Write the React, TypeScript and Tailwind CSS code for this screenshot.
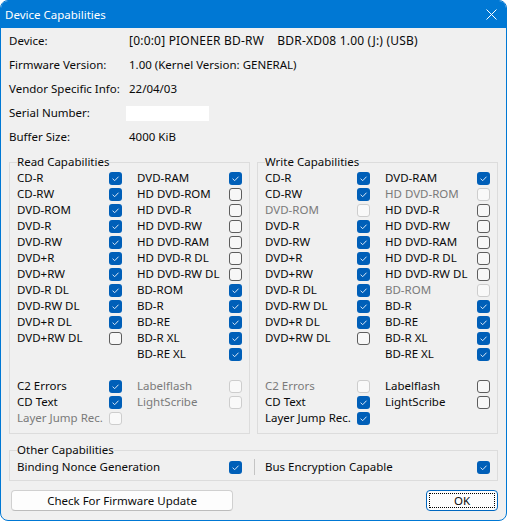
import type { ReactNode } from "react";

type Cap = { label: string; on?: boolean; off?: boolean };

// off = greyed out (not applicable), on = checked
const readCol1: Cap[] = [
  { label: "CD-R", on: true },
  { label: "CD-RW", on: true },
  { label: "DVD-ROM", on: true },
  { label: "DVD-R", on: true },
  { label: "DVD-RW", on: true },
  { label: "DVD+R", on: true },
  { label: "DVD+RW", on: true },
  { label: "DVD-R DL", on: true },
  { label: "DVD-RW DL", on: true },
  { label: "DVD+R DL", on: true },
  { label: "DVD+RW DL" },
];

const readCol2: Cap[] = [
  { label: "DVD-RAM", on: true },
  { label: "HD DVD-ROM" },
  { label: "HD DVD-R" },
  { label: "HD DVD-RW" },
  { label: "HD DVD-RAM" },
  { label: "HD DVD-R DL" },
  { label: "HD DVD-RW DL" },
  { label: "BD-ROM", on: true },
  { label: "BD-R", on: true },
  { label: "BD-RE", on: true },
  { label: "BD-R XL", on: true },
  { label: "BD-RE XL", on: true },
];

const readExtra: (Cap | null)[] = [
  { label: "C2 Errors", on: true },
  { label: "Labelflash", off: true },
  { label: "CD Text", on: true },
  { label: "LightScribe", off: true },
  { label: "Layer Jump Rec.", off: true },
  null,
];

const writeCol1: Cap[] = [
  { label: "CD-R", on: true },
  { label: "CD-RW", on: true },
  { label: "DVD-ROM", off: true },
  { label: "DVD-R", on: true },
  { label: "DVD-RW", on: true },
  { label: "DVD+R", on: true },
  { label: "DVD+RW", on: true },
  { label: "DVD-R DL", on: true },
  { label: "DVD-RW DL", on: true },
  { label: "DVD+R DL", on: true },
  { label: "DVD+RW DL" },
];

const writeCol2: Cap[] = [
  { label: "DVD-RAM", on: true },
  { label: "HD DVD-ROM", off: true },
  { label: "HD DVD-R" },
  { label: "HD DVD-RW" },
  { label: "HD DVD-RAM" },
  { label: "HD DVD-R DL" },
  { label: "HD DVD-RW DL" },
  { label: "BD-ROM", off: true },
  { label: "BD-R", on: true },
  { label: "BD-RE", on: true },
  { label: "BD-R XL", on: true },
  { label: "BD-RE XL", on: true },
];

const writeExtra: (Cap | null)[] = [
  { label: "C2 Errors", off: true },
  { label: "Labelflash" },
  { label: "CD Text", on: true },
  { label: "LightScribe" },
  { label: "Layer Jump Rec.", on: true },
  null,
];

const info: [string, ReactNode][] = [
  [
    "Device:",
    <span className="text-[12px] tracking-[0.2px]">
      [0:0:0] PIONEER BD-RW{"\u00a0\u00a0\u00a0\u00a0"}BDR-XD08 1.00 (J:) (USB)
    </span>,
  ],
  ["Firmware Version:", "1.00 (Kernel Version: GENERAL)"],
  ["Vendor Specific Info:", "22/04/03"],
  ["Serial Number:", <div className="ml-[-3px] h-[15px] w-[83px] bg-white" />],
  ["Buffer Size:", "4000 KiB"],
];

function Box({ on, off }: { on?: boolean; off?: boolean }) {
  if (on) {
    return (
      <span className="flex h-[13px] w-[13px] shrink-0 items-center justify-center rounded-[3px] bg-[#005fb8]">
        <svg width="13" height="13" viewBox="0 0 13 13" fill="none">
          <path d="M3.6 6.7l2.1 2 3.8-4" stroke="#dbe8f6" strokeWidth="1" />
        </svg>
      </span>
    );
  }
  return (
    <span
      className={
        off
          ? "h-[13px] w-[13px] shrink-0 rounded-[3px] border border-[#cdcdcd] bg-[#f9f9f9]"
          : "h-[13px] w-[13px] shrink-0 rounded-[3px] border border-[#5d5d5d] bg-[#f7f7f7]"
      }
    />
  );
}

function Row({ cap }: { cap: Cap }) {
  return (
    <div className="flex h-[16px] w-[105px] items-center">
      <span className={cap.off ? "flex-1 text-[#7a7a7a]" : "flex-1"}>{cap.label}</span>
      <Box on={cap.on} off={cap.off} />
    </div>
  );
}

function Group({
  title,
  col1,
  col2,
  extra,
}: {
  title: string;
  col1: Cap[];
  col2: Cap[];
  extra: (Cap | null)[];
}) {
  return (
    <fieldset className="w-[241px] border border-[#dcdcdc] px-[7px] pb-[7px]">
      <legend className="h-[16px] leading-[16px]">{title}</legend>
      <div className="flex gap-x-[15px]">
        <div className="flex flex-col">
          {col1.map((c) => (
            <Row key={c.label} cap={c} />
          ))}
        </div>
        <div className="flex flex-col">
          {col2.map((c) => (
            <Row key={c.label} cap={c} />
          ))}
        </div>
      </div>
      <div className="mt-[16px] grid grid-cols-[105px_105px] gap-x-[15px]">
        {extra.map((c, i) => (c ? <Row key={c.label} cap={c} /> : <div key={i} />))}
      </div>
    </fieldset>
  );
}

export default function App() {
  return (
    <div className="h-[521px] w-[507px] bg-white font-['Noto_Sans','Open_Sans',sans-serif] text-[11.5px] leading-[16px] text-[#0a0a0a]">
      <div className="flex h-full flex-col overflow-hidden rounded-[8px] border border-[#0078d4] bg-[#f0f0f0]">
        <div className="flex h-[27px] shrink-0 items-center justify-between bg-[#0078d4] pl-[4px] pr-[9px] text-white">
          <span>Device Capabilities</span>
          <svg width="11" height="11" viewBox="0 0 11 11" fill="none">
            <path d="M0.5 0.5l10 10M10.5 0.5l-10 10" stroke="white" strokeWidth="1" />
          </svg>
        </div>

        <div className="flex flex-col px-[8px] pt-[1px]">
          {info.map(([k, v]) => (
            <div key={k} className="flex h-[24px] items-center">
              <span className="w-[120px] shrink-0">{k}</span>
              <span>{v}</span>
            </div>
          ))}

          <div className="mt-[5px] flex gap-x-[7px]">
            <Group title="Read Capabilities" col1={readCol1} col2={readCol2} extra={readExtra} />
            <Group title="Write Capabilities" col1={writeCol1} col2={writeCol2} extra={writeExtra} />
          </div>

          <fieldset className="mt-[8px] border border-[#dcdcdc] px-[7px] pb-[5px]">
            <legend className="h-[16px] leading-[16px]">Other Capabilities</legend>
            <div className="mt-[1px] flex h-[16px] items-center">
              <div className="flex w-[225px] items-center">
                <span className="flex-1">Binding Nonce Generation</span>
                <Box on />
              </div>
              <div className="ml-[12px] mr-[10px] h-[16px] w-px bg-[#c4c4c4]" />
              <div className="flex w-[225px] items-center">
                <span className="flex-1">Bus Encryption Capable</span>
                <Box on />
              </div>
            </div>
          </fieldset>

          <div className="mt-[9px] flex items-center justify-between">
            <button className="ml-[2px] h-[21px] w-[222px] rounded-[4px] border border-[#d0d0d0] border-b-[#bcbcbc] bg-[#fdfdfd] leading-[16px]">
              Check For Firmware Update
            </button>
            <button className="relative h-[21px] w-[72px] rounded-[4px] border border-[#0067c0] bg-[#fdfdfd] leading-[16px]">
              <span className="absolute inset-[2px] border border-dotted border-black" />
              OK
            </button>
          </div>
        </div>
      </div>
    </div>
  );
}
